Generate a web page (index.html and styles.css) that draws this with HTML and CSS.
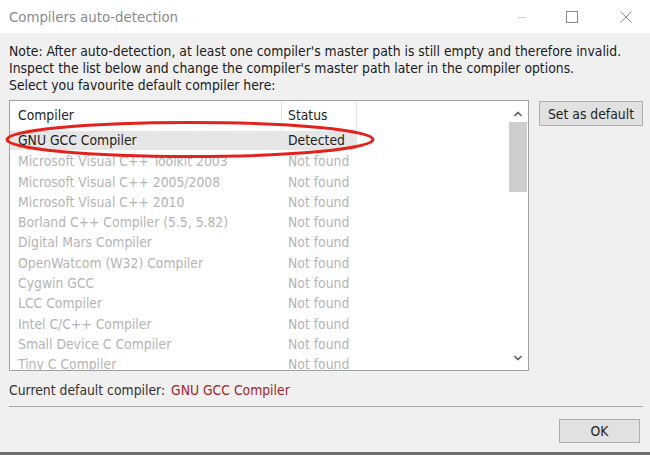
FILE: index.html
```html
<!DOCTYPE html>
<html>
<head>
<meta charset="utf-8">
<link rel="stylesheet" href="styles.css">
</head>
<body>
<div class="window">
  <div class="titlebar">
    <span class="title">Compilers auto-detection</span>
    <div class="controls">
      <svg class="ctl min" width="10" height="12" viewBox="0 0 10 12"><path d="M1 6.5h8" stroke="#d0d0d0" stroke-width="1"/></svg>
      <svg class="ctl" width="12" height="12" viewBox="0 0 12 12"><rect x="0.5" y="0.5" width="11" height="11" fill="none" stroke="#8a8a8a" stroke-width="1"/></svg>
      <svg class="ctl" width="12" height="12" viewBox="0 0 12 12"><path d="M0.5 0.5L11.5 11.5M11.5 0.5L0.5 11.5" stroke="#8a8a8a" stroke-width="1"/></svg>
    </div>
  </div>
  <div class="body">
    <p class="note">Note: After auto-detection, at least one compiler's master path is still empty and therefore invalid.<br>Inspect the list below and change the compiler's master path later in the compiler options.<br>Select you favourite default compiler here:</p>
    <div class="main">
      <div class="list">
        <div class="rows">
          <div class="row head"><span class="c1">Compiler</span><span class="c2">Status</span></div>
          <div class="row sel"><span class="c1">GNU GCC Compiler</span><span class="c2">Detected</span></div>
          <div class="row off"><span class="c1">Microsoft Visual C++ Toolkit 2003</span><span class="c2">Not found</span></div>
          <div class="row off"><span class="c1">Microsoft Visual C++ 2005/2008</span><span class="c2">Not found</span></div>
          <div class="row off"><span class="c1">Microsoft Visual C++ 2010</span><span class="c2">Not found</span></div>
          <div class="row off"><span class="c1">Borland C++ Compiler (5.5, 5.82)</span><span class="c2">Not found</span></div>
          <div class="row off"><span class="c1">Digital Mars Compiler</span><span class="c2">Not found</span></div>
          <div class="row off"><span class="c1">OpenWatcom (W32) Compiler</span><span class="c2">Not found</span></div>
          <div class="row off"><span class="c1">Cygwin GCC</span><span class="c2">Not found</span></div>
          <div class="row off"><span class="c1">LCC Compiler</span><span class="c2">Not found</span></div>
          <div class="row off"><span class="c1">Intel C/C++ Compiler</span><span class="c2">Not found</span></div>
          <div class="row off"><span class="c1">Small Device C Compiler</span><span class="c2">Not found</span></div>
          <div class="row off"><span class="c1">Tiny C Compiler</span><span class="c2">Not found</span></div>
        </div>
        <div class="scrollbar">
          <svg class="arrow" width="10" height="8" viewBox="0 0 10 8"><path d="M1.5 6L5 2.5L8.5 6" fill="none" stroke="#606060" stroke-width="1.6"/></svg>
          <div class="thumb"></div>
          <div class="track"></div>
          <svg class="arrow" width="10" height="8" viewBox="0 0 10 8"><path d="M1.5 2L5 5.5L8.5 2" fill="none" stroke="#606060" stroke-width="1.6"/></svg>
        </div>
        <svg class="ring" width="380" height="42" viewBox="0 0 380 42"><ellipse cx="186" cy="19.5" rx="183" ry="17" fill="none" stroke="#e4221d" stroke-width="3"/></svg>
      </div>
      <div class="side">
        <button class="btn setdef">Set as default</button>
      </div>
    </div>
    <div class="current">Current default compiler: <span class="cur">GNU GCC Compiler</span></div>
    <div class="sep"></div>
    <div class="footer"><button class="btn ok">OK</button></div>
  </div>
  <div class="taskbar"></div>
</div>
</body>
</html>
```
FILE: styles.css
```css
html, body {
  margin: 0;
  padding: 0;
}
body {
  width: 650px;
  height: 455px;
  overflow: hidden;
  background: #f0f0f0;
  font-family: "DejaVu Sans Condensed", "DejaVu Sans", sans-serif;
  font-size: 13.8px;
  color: #1e1e1e;
}
.window {
  display: flex;
  flex-direction: column;
  height: 455px;
}
.titlebar {
  height: 33px;
  background: #ffffff;
  display: flex;
  align-items: center;
  justify-content: space-between;
  padding-left: 9px;
  flex-shrink: 0;
}
.title {
  font-size: 14.8px;
  color: #8a8a8a;
  margin-top: -1px;
}
.controls {
  display: flex;
  align-items: center;
  gap: 42px;
  padding-right: 18px;
}
.controls .min {
  margin-right: -3px;
}
.body {
  flex: 1;
  padding: 10px 7px 0 9px;
  display: flex;
  flex-direction: column;
}
.note {
  margin: 0;
  line-height: 17px;
  color: #1a1a1a;
}
.main {
  display: flex;
  margin-top: 6px;
  gap: 10px;
}
.list {
  position: relative;
  width: 518px;
  height: 269px;
  border: 1px solid #a0a0a0;
  background: #ffffff;
  display: flex;
}
.rows {
  width: 498px;
  overflow: hidden;
}
.row {
  display: flex;
  height: 20.3px;
  line-height: 20px;
}
.row.head {
  height: 30px;
  line-height: 29px;
}
.c1 {
  width: 264px;
  padding-left: 8px;
  white-space: nowrap;
  overflow: hidden;
}
.c2 {
  width: 69px;
  padding-left: 6px;
  white-space: nowrap;
}
.head .c1 { border-right: 1px solid #e5e5e5; width: 263px; }
.head .c2 { border-right: 1px solid #e5e5e5; width: 68px; }
.row.sel {
  background: #e6e6e6;
  width: 347px;
  height: 19px;
  line-height: 19px;
  margin-bottom: 1.3px;
}
.row.off {
  color: #b4b4b4;
}
.scrollbar {
  width: 20px;
  display: flex;
  flex-direction: column;
  align-items: center;
}
.arrow {
  flex-shrink: 0;
  margin: 9px 0 4px;
}
.arrow:last-child {
  margin: 5px 0 8px;
}
.thumb {
  width: 18px;
  height: 70px;
  background: #cdcdcd;
  flex-shrink: 0;
}
.track {
  flex: 1;
}
.ring {
  position: absolute;
  left: -6px;
  top: 19px;
}
.side {
  display: flex;
  flex-direction: column;
}
.btn {
  font-family: inherit;
  font-size: 13.8px;
  color: #1e1e1e;
  background: #e1e1e1;
  border: 1px solid #adadad;
  padding: 0;
  margin: 0;
}
.setdef {
  width: 104px;
  height: 25px;
  margin-top: 1px;
}
.current {
  margin-top: 10px;
  line-height: 18px;
  color: #333333;
}
.cur {
  color: #a3262c;
  margin-left: 2px;
}
.sep {
  height: 1px;
  background: #a8a8a8;
  margin-top: 7px;
}
.footer {
  display: flex;
  justify-content: flex-end;
  padding-top: 12px;
  padding-right: 3px;
}
.ok {
  width: 81px;
  height: 24px;
}
.taskbar {
  height: 3px;
  background: #6f6f6f;
  margin-top: auto;
  flex-shrink: 0;
}
```
